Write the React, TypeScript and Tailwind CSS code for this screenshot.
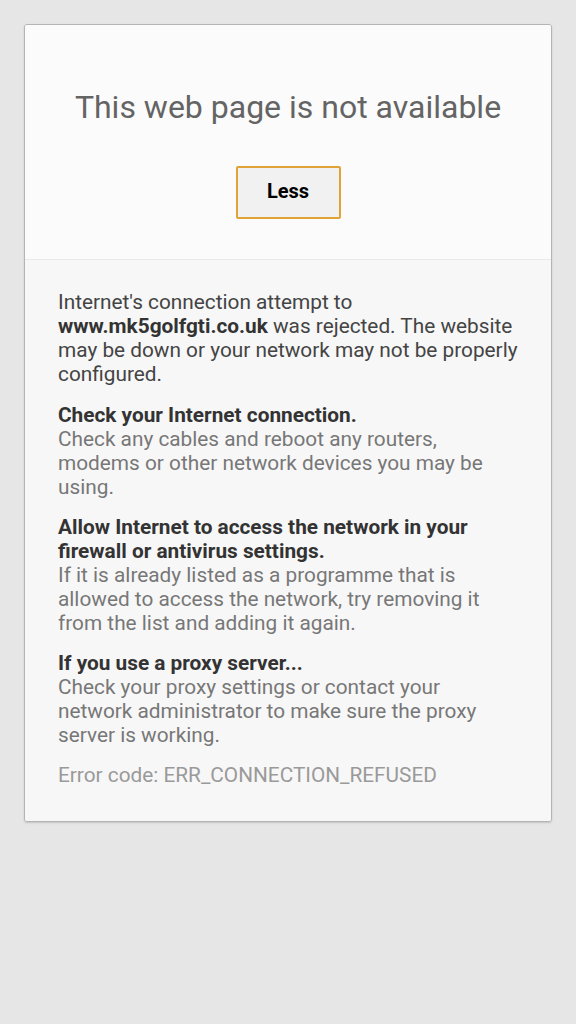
import React from "react";

export default function App() {
  return (
    <div className="min-h-[1024px] w-[576px] bg-[#e6e6e6] pt-[24px]" style={{ fontFamily: "Roboto, 'Noto Sans', sans-serif" }}>
      <div className="mx-[24px] overflow-hidden rounded-[3px] border border-[#b4b4b4] shadow-[0_1px_2px_rgba(0,0,0,0.15)]">
        <div className="flex flex-col items-center border-b border-[#e9e9e9] bg-[#fbfbfb] pt-[64px] pb-[40px]">
          <h1 className="text-[32px] leading-[36px] text-[#646464]">This web page is not available</h1>
          <button className="mt-[41px] h-[53px] w-[105px] rounded-[2px] border-2 border-[#e0a436] bg-[#f1f1f1] pb-[3px] text-[20px] font-bold text-black">
            Less
          </button>
        </div>
        <div className="bg-[#f7f7f7] px-[33px] pt-[30px] pb-[34px] text-[20.8px] leading-[24px]">
          <p className="text-[#444]">
            Internet's connection attempt to{" "}
            <span className="font-bold text-[#333]">www.mk5golfgti.co.uk</span> was rejected. The website may be down or your network may not be properly configured.
          </p>
          <div className="mt-[17px]">
            <p className="font-bold text-[#333]">Check your Internet connection.</p>
            <p className="text-[#777]">Check any cables and reboot any routers, modems or other network devices you may be using.</p>
          </div>
          <div className="mt-[16px]">
            <p className="font-bold text-[#333]">Allow Internet to access the network in your firewall or antivirus settings.</p>
            <p className="text-[#777]">If it is already listed as a programme that is allowed to access the network, try removing it from the list and adding it again.</p>
          </div>
          <div className="mt-[16px]">
            <p className="font-bold text-[#333]">If you use a proxy server...</p>
            <p className="text-[#777]">Check your proxy settings or contact your network administrator to make sure the proxy server is working.</p>
          </div>
          <p className="mt-[16px] text-[#9a9a9a]">Error code: ERR_CONNECTION_REFUSED</p>
        </div>
      </div>
    </div>
  );
}
